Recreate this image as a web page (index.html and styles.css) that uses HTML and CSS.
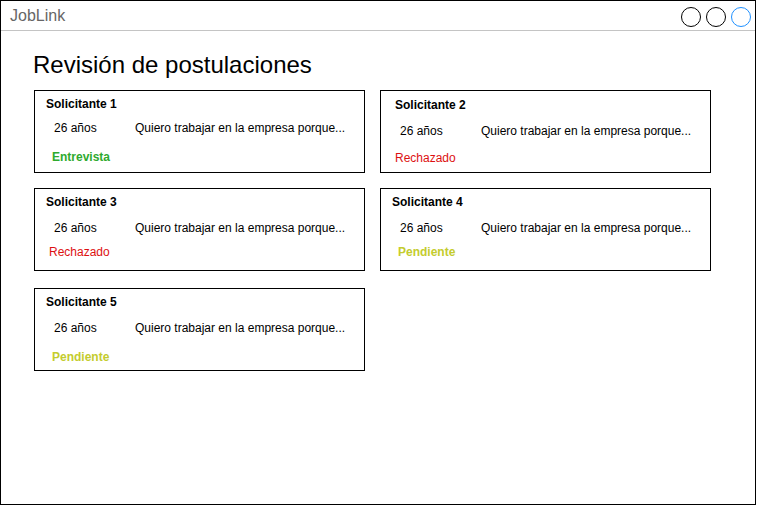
FILE: index.html
```html
<!DOCTYPE html>
<html lang="es">
<head>
<meta charset="utf-8">
<title>JobLink</title>
<link rel="stylesheet" href="styles.css">
</head>
<body>
<div class="frame">
  <header class="topbar">
    <span class="brand">JobLink</span>
    <div class="controls">
      <span class="dot"></span>
      <span class="dot"></span>
      <span class="dot dot--blue"></span>
    </div>
  </header>
  <main class="content">
    <h1 class="page-title">Revisión de postulaciones</h1>
    <div class="cards">
      <div class="card">
        <div class="card-title">Solicitante 1</div>
        <div class="card-info"><span class="age">26 años</span><span class="motive">Quiero trabajar en la empresa porque...</span></div>
        <div class="status status--green status--bold status--in">Entrevista</div>
      </div>
      <div class="card">
        <div class="card-title card-title--in">Solicitante 2</div>
        <div class="card-info card-info--low"><span class="age">26 años</span><span class="motive">Quiero trabajar en la empresa porque...</span></div>
        <div class="status status--red status--near">Rechazado</div>
      </div>
      <div class="card">
        <div class="card-title">Solicitante 3</div>
        <div class="card-info card-info--low"><span class="age">26 años</span><span class="motive">Quiero trabajar en la empresa porque...</span></div>
        <div class="status status--red status--up">Rechazado</div>
      </div>
      <div class="card">
        <div class="card-title">Solicitante 4</div>
        <div class="card-info card-info--low"><span class="age">26 años</span><span class="motive">Quiero trabajar en la empresa porque...</span></div>
        <div class="status status--yellow status--bold status--in status--up">Pendiente</div>
      </div>
      <div class="card card--down">
        <div class="card-title">Solicitante 5</div>
        <div class="card-info card-info--low"><span class="age">26 años</span><span class="motive">Quiero trabajar en la empresa porque...</span></div>
        <div class="status status--yellow status--bold status--in status--far">Pendiente</div>
      </div>
    </div>
  </main>
</div>
</body>
</html>
```

FILE: styles.css
```css
* { box-sizing: border-box; }
html, body { margin: 0; padding: 0; background: #fff; }
body { font-family: "Liberation Sans", Arial, sans-serif; color: #000; }

.frame {
  width: 756px;
  height: 505px;
  border: 1px solid #000;
  overflow: hidden;
}

.topbar {
  height: 30px;
  border-bottom: 1px solid #c4c4c4;
  display: flex;
  align-items: center;
  justify-content: space-between;
  padding: 0 4px 0 9px;
}
.brand {
  font-size: 16px;
  color: #666;
  line-height: 18px;
  margin-top: 1px;
}
.controls { display: flex; gap: 5px; margin-top: 2px; }
.dot {
  width: 20px;
  height: 20px;
  border: 1px solid #000;
  border-radius: 50%;
}
.dot--blue { border-color: #1e90ff; }

.content { padding: 0 0 0 32px; }
.page-title {
  margin: 20px 0 11px;
  font-size: 24px;
  line-height: 28px;
  font-weight: normal;
}

.cards {
  display: grid;
  grid-template-columns: 331px 331px;
  align-items: start;
  column-gap: 15px;
  row-gap: 15px;
  margin-left: 1px;
}
.card {
  height: 83px;
  border: 1px solid #000;
  padding: 6px 0 0 11px;
  font-size: 12px;
}
.card--down { margin-top: 2px; }

.card-title { font-weight: bold; line-height: 14px; }
.card-title--in { margin-left: 3px; margin-top: 1px; }

.card-info {
  display: flex;
  margin-top: 10px;
  line-height: 14px;
  padding-left: 8px;
}
.card-title--in + .card-info--low { margin-top: 9px; }
.card-title + .card-info--low { margin-top: 12px; }
.age { width: 81px; }

.status { line-height: 14px; margin-top: 15px; margin-left: 3px; }
.status--in { margin-left: 6px; }
.status--near { margin-left: 3px; margin-top: 13px; }
.status--up { margin-top: 10px; }
.status--far { margin-top: 15px; }
.status--bold { font-weight: bold; }
.status--green { color: #2eaa2e; }
.status--red { color: #dd1111; }
.status--yellow { color: #c4cc2e; }
```
